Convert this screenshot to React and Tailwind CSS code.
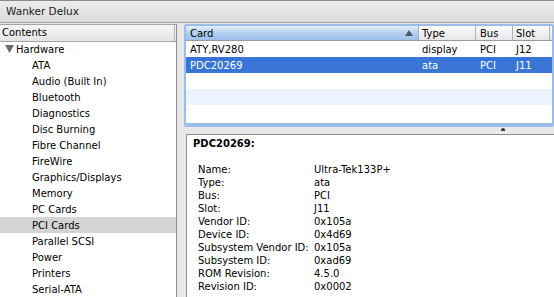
import React from 'react';

const tree = [
  'ATA', 'Audio (Built In)', 'Bluetooth', 'Diagnostics', 'Disc Burning', 'Fibre Channel',
  'FireWire', 'Graphics/Displays', 'Memory', 'PC Cards', 'PCI Cards', 'Parallel SCSI',
  'Power', 'Printers', 'Serial-ATA',
];

const cards = [
  { card: 'ATY,RV280', type: 'display', bus: 'PCI', slot: 'J12' },
  { card: 'PDC20269', type: 'ata', bus: 'PCI', slot: 'J11', selected: true },
];

const details = [
  ['Name:', 'Ultra-Tek133P+'],
  ['Type:', 'ata'],
  ['Bus:', 'PCI'],
  ['Slot:', 'J11'],
  ['Vendor ID:', '0x105a'],
  ['Device ID:', '0x4d69'],
  ['Subsystem Vendor ID:', '0x105a'],
  ['Subsystem ID:', '0xad69'],
  ['ROM Revision:', '4.5.0'],
  ['Revision ID:', '0x0002'],
];

const App = () => {
  return (
    <div className="w-[554px] h-[297px] overflow-hidden flex flex-col bg-[#e9e9e9] text-[10px] text-black font-['DejaVu_Sans',sans-serif]">
      {/* Title bar */}
      <div className="h-[23px] shrink-0 flex items-center px-[6px] border-t border-b border-t-[#8a8a8a] border-b-[#a3a3a3] bg-gradient-to-b from-[#ececec] to-[#dcdcdc] text-[10.5px] text-[#1a1a1a]">
        Wanker Delux
      </div>

      <div className="flex flex-1 min-h-0 pt-[1px]">
        {/* Contents tree */}
        <div className="w-[177px] shrink-0 flex flex-col bg-white border-r border-[#8e8e8e]">
          <div className="h-[18px] flex items-center pl-[2px] border-y border-[#a5a5a5] bg-gradient-to-b from-[#f7f7f7] to-[#e3e3e3]">
            <span className="flex-1">Contents</span>
            <span className="w-px h-full bg-[#b5b5b5] mr-[1px]" />
          </div>
          <div className="h-[16px] flex items-center pl-[5px]">
            <svg width="9" height="8" viewBox="0 0 9 8" className="mr-[2px]">
              <polygon points="0,0 9,0 4.5,8" fill="#6b6b6b" />
            </svg>
            Hardware
          </div>
          {tree.map((item) => (
            <div
              key={item}
              className={`h-[16px] shrink-0 flex items-center pl-[32px] ${item === 'PCI Cards' ? 'bg-[#d4d4d4]' : ''}`}
            >
              {item}
            </div>
          ))}
        </div>

        {/* Right side */}
        <div className="flex-1 flex flex-col pl-[7px] min-w-0">
          {/* Card table with focus ring */}
          <div className="h-[103px] shrink-0 border-2 border-b-[4px] border-[#9dbce7] rounded-[2px] bg-white overflow-hidden">
            <div className="h-[15px] flex border-b border-[#9a9a9a]">
              <div className="w-[233px] flex items-center pl-[4px] border-r border-[#9fb4cf] bg-gradient-to-b from-[#e4eefa] via-[#b4cff0] to-[#9dc0ea]">
                <span className="flex-1">Card</span>
                <svg width="8" height="6" viewBox="0 0 8 6" className="mr-[5px]">
                  <polygon points="0,6 8,6 4,0" fill="#505a66" />
                </svg>
              </div>
              <div className="w-[57px] flex items-center pl-[3px] border-r border-[#b3b3b3] bg-gradient-to-b from-[#fbfbfb] to-[#e6e6e6]">Type</div>
              <div className="w-[37px] flex items-center pl-[4px] border-r border-[#b3b3b3] bg-gradient-to-b from-[#fbfbfb] to-[#e6e6e6]">Bus</div>
              <div className="w-[37px] flex items-center pl-[3px] border-r border-[#b3b3b3] bg-gradient-to-b from-[#fbfbfb] to-[#e6e6e6]">Slot</div>
              <div className="flex-1 bg-gradient-to-b from-[#fbfbfb] to-[#e6e6e6]" />
            </div>
            {cards.map((c) => (
              <div key={c.card} className={`h-[16px] flex items-center ${c.selected ? 'bg-[#3875d7] text-white' : ''}`}>
                <div className="w-[233px] pl-[4px]">{c.card}</div>
                <div className="w-[57px] pl-[3px]">{c.type}</div>
                <div className="w-[37px] pl-[4px]">{c.bus}</div>
                <div className="w-[37px] pl-[3px]">{c.slot}</div>
              </div>
            ))}
            <div className="h-[16px]" />
            <div className="h-[16px] bg-[#edf3fe]" />
            <div className="h-[16px]" />
          </div>

          {/* Splitter */}
          <div className="h-[7px] shrink-0 flex justify-start pl-[317px] pt-[1px]">
            <div className="w-[4px] h-[3px] rounded-t-full bg-[#3a3a3a]" />
          </div>

          {/* Detail pane */}
          <div className="flex-1 ml-[2px] bg-white border-l border-t border-[#8c8c8c] min-h-0">
            <div className="h-[16px] flex items-center pl-[6px] font-bold">PDC20269:</div>
            <div className="mt-[12px] pl-[11px]">
              {details.map(([label, value]) => (
                <div key={label} className="h-[13px] flex items-center">
                  <div className="w-[116px]">{label}</div>
                  <div>{value}</div>
                </div>
              ))}
            </div>
          </div>
        </div>
      </div>
    </div>
  );
};

export default App;
